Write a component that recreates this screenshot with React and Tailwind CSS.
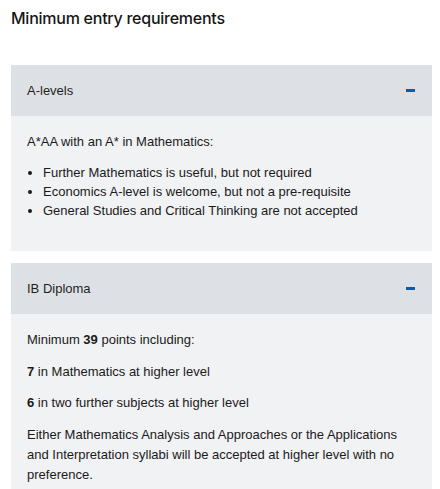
import React from "react";

function Minus() {
  return <span className="block w-[9px] h-[3px] bg-[#0b5cab]" />;
}

function Header({ title }) {
  return (
    <div className="h-[51px] bg-[#dde1e5] flex items-center justify-between pl-4 pr-[17px]">
      <span className="text-[13px] text-[#1f1f1f]">{title}</span>
      <Minus />
    </div>
  );
}

export default function App() {
  return (
    <div className="w-[440px] h-[489px] bg-white overflow-hidden text-[#1a1a1a]" style={{ fontFamily: "'Liberation Sans', Arial, sans-serif" }}>
      <h2 className="pl-[11px] pt-[8px] text-[16px] font-medium leading-[20px] tracking-[-0.25px] text-[#161616]" style={{ fontFamily: "Inter, sans-serif" }}>Minimum entry requirements</h2>
      <div className="ml-[11px] mr-[8px] mt-[37px] flex flex-col gap-[12px]">
        <div>
          <Header title="A-levels" />
          <div className="bg-[#f1f2f4] pl-4 pr-4 pt-[16px] pb-[31px] text-[13px] leading-[19px]">
            <p>A*AA with an A* in Mathematics:</p>
            <ul className="mt-[12px] list-disc pl-[16px]">
              <li>Further Mathematics is useful, but not required</li>
              <li>Economics A-level is welcome, but not a pre-requisite</li>
              <li>General Studies and Critical Thinking are not accepted</li>
            </ul>
          </div>
        </div>
        <div>
          <Header title="IB Diploma" />
          <div className="bg-[#f1f2f4] pl-4 pr-4 pt-[16px] pb-[20px] text-[13px] leading-[20px] flex flex-col gap-[11.5px]">
            <p>Minimum <b className="font-bold">39</b> points including:</p>
            <p><b className="font-bold">7</b> in Mathematics at higher level</p>
            <p><b className="font-bold">6</b> in two further subjects at higher level</p>
            <p>Either Mathematics Analysis and Approaches or the Applications and Interpretation syllabi will be accepted at higher level with no preference.</p>
          </div>
        </div>
      </div>
    </div>
  );
}
